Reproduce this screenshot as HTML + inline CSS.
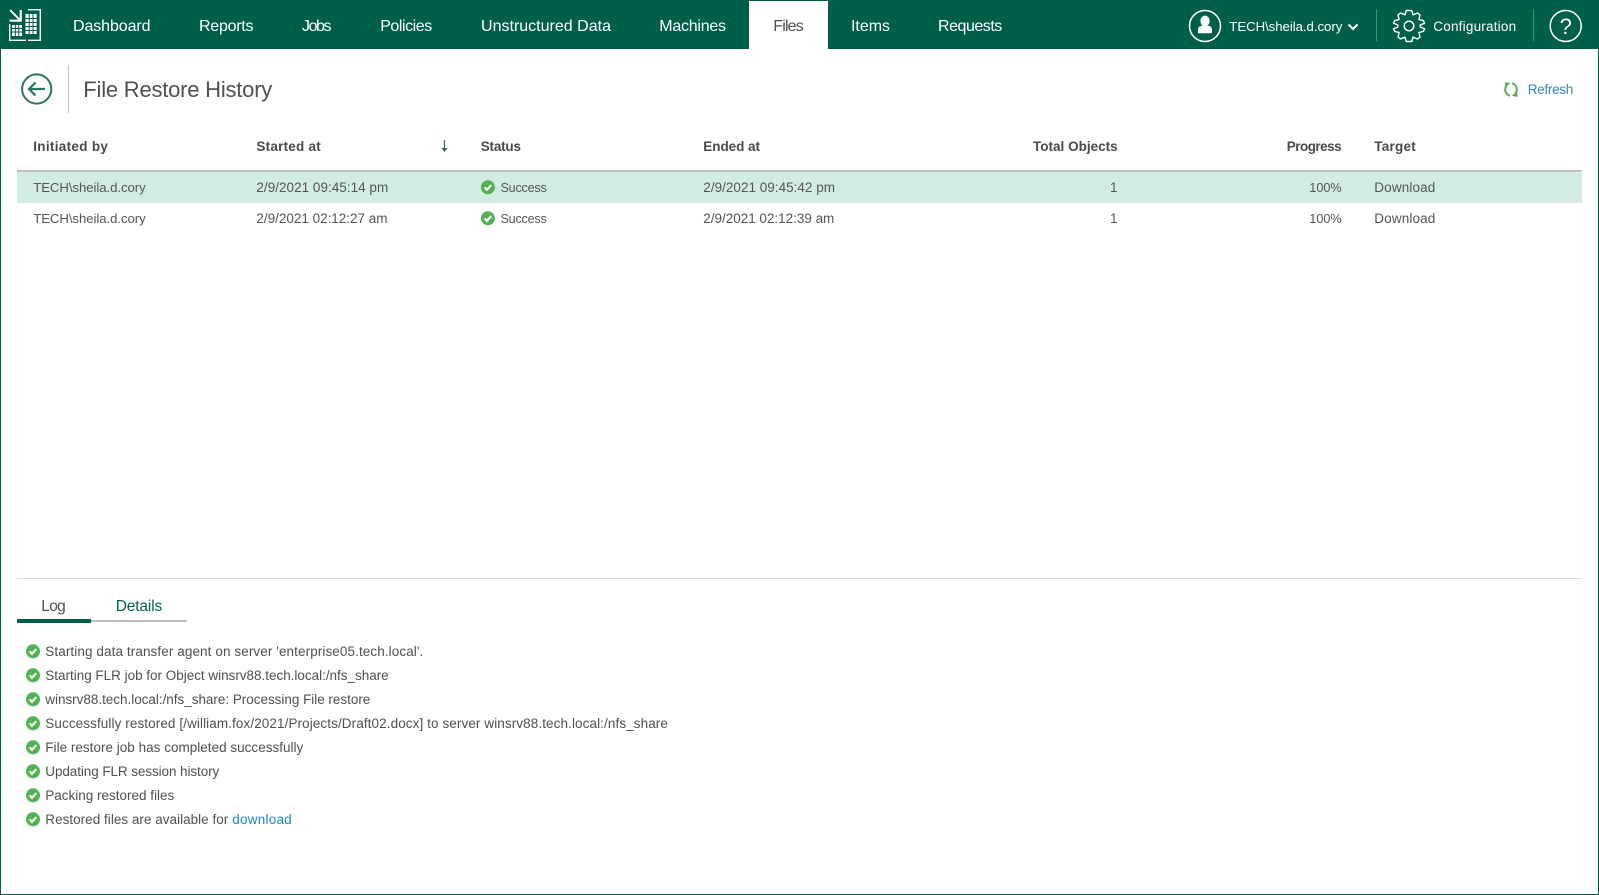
<!DOCTYPE html>
<html lang="en">
<head>
<meta charset="utf-8">
<title>File Restore History</title>
<style>
html,body{margin:0;padding:0;background:#fff;width:1599px;height:895px;overflow:hidden}
svg{display:block;position:absolute;left:0;top:0}
text{font-family:"Liberation Sans",Arial,sans-serif;font-size:13.5px;fill:#555;white-space:pre}
.nav{font-size:16px;fill:#fff}
.hd{font-weight:700;fill:#4a4a4a;font-size:13.5px}
.log{fill:#505050;font-size:13.5px}
.top{fill:#fff;font-size:13.5px}
.su{font-size:12.6px}
.pc{font-size:12.7px}
.us{font-size:13.2px}
</style>
</head>
<body>
<svg width="1599" height="895" viewBox="0 0 1599 895" xmlns="http://www.w3.org/2000/svg">
<!-- frame -->
<rect x="0" y="0" width="1599" height="895" fill="#fff"/>
<rect x="0" y="0" width="1" height="895" fill="#005f4b"/>
<rect x="1598" y="0" width="1" height="895" fill="#005f4b"/>
<rect x="0" y="894" width="1599" height="1" fill="#005f4b"/>
<!-- header -->
<rect x="0" y="0" width="1599" height="49" fill="#005f4b"/>
<rect x="749" y="1" width="79" height="48" fill="#fff"/>
<!-- logo -->
<g fill="none" stroke="#fff" stroke-width="1.4">
<path d="M28 9.7H40.3V40.3H28"/>
<path d="M9.7 24V40.3H26"/>
</g>
<path d="M9.5 10.8L10.8 9.5L19.6 18.3V10H21.8V21.8H9.5V19.6H18.1Z" fill="#fff"/>
<rect x="25.5" y="14" width="11.2" height="20" fill="#fff"/>
<path d="M25.5 18.5H36.7M25.5 22.5H36.7M25.5 26.5H36.7M25.5 30.5H36.7M29.2 14V34M33 14V34" stroke="#005f4b" stroke-width="1"/>
<rect x="12" y="25" width="10" height="11" fill="#fff"/>
<path d="M12 28.5H22M12 32H22M15.3 25V36M18.7 25V36" stroke="#005f4b" stroke-width="1"/>
<!-- nav -->
<text class="nav" x="73" y="31" textLength="77.5">Dashboard</text>
<text class="nav" x="199" y="31" textLength="54.5">Reports</text>
<text class="nav" x="302" y="31" textLength="29.5">Jobs</text>
<text class="nav" x="380.2" y="31" textLength="52">Policies</text>
<text class="nav" x="481" y="31" textLength="130">Unstructured Data</text>
<text class="nav" x="659.3" y="31" textLength="66.7">Machines</text>
<text class="nav" x="773.3" y="31" textLength="30.4" style="fill:#505050">Files</text>
<text class="nav" x="851" y="31" textLength="39">Items</text>
<text class="nav" x="938" y="31" textLength="64.3">Requests</text>
<!-- user -->
<circle cx="1205" cy="26" r="15.5" fill="none" stroke="#fff" stroke-width="1.5"/>
<ellipse cx="1205" cy="21" rx="4.6" ry="5.4" fill="#fff"/>
<path d="M1198 33.3V29.5Q1198 26.6 1201.5 25.8H1208.5Q1212 26.6 1212 29.5V33.3Z" fill="#fff"/>
<text class="top us" x="1229.3" y="31" textLength="113">TECH\sheila.d.cory</text>
<path d="M1348.5 24.5L1353 29L1357.5 24.5" fill="none" stroke="#fff" stroke-width="2.2"/>
<rect x="1376" y="9" width="1" height="32" fill="#4d8d7d"/>
<!-- gear -->
<g transform="translate(1409 26)" fill="none" stroke="#fff" stroke-width="1.4" stroke-linejoin="round">
<circle r="4.8"/>
<path d="M-2.8 -15.5H2.8L4 -11.2L8.6 -13L11 -11L9.9 -6.6L14.4 -5.3L15.5 -2.8L11.2 -1L11.2 1L15.5 2.8L14.4 5.3L9.9 6.6L11 11L8.6 13L4 11.2L2.8 15.5H-2.8L-4 11.2L-8.6 13L-11 11L-9.9 6.6L-14.4 5.3L-15.5 2.8L-11.2 1L-11.2 -1L-15.5 -2.8L-14.4 -5.3L-9.9 -6.6L-11 -11L-8.6 -13L-4 -11.2Z"/>
</g>
<text class="top" x="1433.3" y="31" textLength="82.8">Configuration</text>
<rect x="1533" y="9" width="1" height="32" fill="#4d8d7d"/>
<circle cx="1565.7" cy="26" r="15.5" fill="none" stroke="#fff" stroke-width="1.5"/>
<text x="1565.7" y="34" text-anchor="middle" style="font-size:22px;fill:#fff">?</text>
<!-- title bar -->
<circle cx="36.7" cy="89" r="14.6" fill="none" stroke="#2b7660" stroke-width="2"/>
<path d="M45 89H29M35.5 82.5L29 89L35.5 95.5" fill="none" stroke="#2b7660" stroke-width="2.2"/>
<rect x="68" y="65" width="1" height="48" fill="#c4c4c4"/>
<text x="83.3" y="97" textLength="189" style="font-size:22px;fill:#505050">File Restore History</text>
<!-- refresh -->
<g fill="none" stroke="#52b153" stroke-width="2">
<path d="M1506.6 85.5A6.4 6.4 0 0 0 1510 95.7"/>
<path d="M1515.4 93.5A6.4 6.4 0 0 0 1512 83.3"/>
</g>
<path d="M1504.6 82.3L1510.4 83L1505.8 87.6Z" fill="#52b153"/>
<path d="M1517.8 96.8L1511.8 96L1516.6 91.4Z" fill="#52b153"/>
<text x="1527.7" y="94" textLength="45.6" style="fill:#2f88bb">Refresh</text>
<!-- table -->
<text class="hd" x="33.2" y="151" textLength="74.7">Initiated by</text>
<text class="hd" x="256.4" y="151" textLength="64.3">Started at</text>
<text class="hd" x="480.7" y="151" textLength="40.3">Status</text>
<text class="hd" x="703.3" y="151" textLength="56.7">Ended at</text>
<text class="hd" x="1033" y="151" textLength="84.7">Total Objects</text>
<text class="hd" x="1286.7" y="151" textLength="55">Progress</text>
<text class="hd" x="1374.3" y="151" textLength="41.4">Target</text>
<path d="M444.5 140V150.5" stroke="#2b6b57" stroke-width="1.2"/>
<path d="M441.5 148L444.5 152L447.5 148Z" fill="#2b6b57"/>
<rect x="17" y="170" width="1565" height="2" fill="#c0c0c0"/>
<rect x="17" y="172" width="1565" height="30" fill="#d2ece1"/>
<rect x="17" y="202" width="1565" height="1" fill="#dfe3e1"/>

<text class="us" x="33.2" y="192" textLength="112.5">TECH\sheila.d.cory</text>
<text x="256.4" y="192" textLength="131.8">2/9/2021 09:45:14 pm</text>
<g transform="translate(487.9 187.3)"><circle r="7" fill="#52b153"/><path d="M-3.4 0.1L-1 2.5L3.4 -2.2" fill="none" stroke="#fff" stroke-width="2.2"/></g>
<text class="su" x="500.5" y="192" textLength="46.3">Success</text>
<text x="703.3" y="192" textLength="131.7">2/9/2021 09:45:42 pm</text>
<text x="1110" y="192">1</text>
<text class="pc" x="1309.3" y="192" textLength="32.4">100%</text>
<text x="1374.3" y="192" textLength="61">Download</text>

<text class="us" x="33.2" y="223" textLength="112.5">TECH\sheila.d.cory</text>
<text x="256.4" y="223" textLength="131.1">2/9/2021 02:12:27 am</text>
<g transform="translate(487.9 218.3)"><circle r="7" fill="#52b153"/><path d="M-3.4 0.1L-1 2.5L3.4 -2.2" fill="none" stroke="#fff" stroke-width="2.2"/></g>
<text class="su" x="500.5" y="223" textLength="46.3">Success</text>
<text x="703.3" y="223" textLength="131">2/9/2021 02:12:39 am</text>
<text x="1110" y="223">1</text>
<text class="pc" x="1309.3" y="223" textLength="32.4">100%</text>
<text x="1374.3" y="223" textLength="61">Download</text>
<!-- bottom panel -->
<rect x="17" y="578" width="1565" height="1" fill="#ddd"/>
<text x="41.3" y="611" textLength="24.4" style="font-size:15.5px;fill:#505050">Log</text>
<text x="115.7" y="611" textLength="46.6" style="font-size:15.5px;fill:#00664f">Details</text>
<rect x="91" y="620" width="96" height="2" fill="#bdbdbd"/>
<rect x="17" y="619" width="74" height="4" fill="#005f4b"/>

<g transform="translate(33 651.3)"><circle r="7" fill="#52b153"/><path d="M-3.4 0.1L-1 2.5L3.4 -2.2" fill="none" stroke="#fff" stroke-width="2.2"/></g>
<text class="log" x="45.3" y="656" textLength="378">Starting data transfer agent on server 'enterprise05.tech.local'.</text>
<g transform="translate(33 675.3)"><circle r="7" fill="#52b153"/><path d="M-3.4 0.1L-1 2.5L3.4 -2.2" fill="none" stroke="#fff" stroke-width="2.2"/></g>
<text class="log" x="45.3" y="680" textLength="343.4">Starting FLR job for Object winsrv88.tech.local:/nfs_share</text>
<g transform="translate(33 699.3)"><circle r="7" fill="#52b153"/><path d="M-3.4 0.1L-1 2.5L3.4 -2.2" fill="none" stroke="#fff" stroke-width="2.2"/></g>
<text class="log" x="45.3" y="704" textLength="325">winsrv88.tech.local:/nfs_share: Processing File restore</text>
<g transform="translate(33 723.3)"><circle r="7" fill="#52b153"/><path d="M-3.4 0.1L-1 2.5L3.4 -2.2" fill="none" stroke="#fff" stroke-width="2.2"/></g>
<text class="log" x="45.3" y="728" textLength="622.6">Successfully restored [/william.fox/2021/Projects/Draft02.docx] to server winsrv88.tech.local:/nfs_share</text>
<g transform="translate(33 747.3)"><circle r="7" fill="#52b153"/><path d="M-3.4 0.1L-1 2.5L3.4 -2.2" fill="none" stroke="#fff" stroke-width="2.2"/></g>
<text class="log" x="45.3" y="752" textLength="258">File restore job has completed successfully</text>
<g transform="translate(33 771.3)"><circle r="7" fill="#52b153"/><path d="M-3.4 0.1L-1 2.5L3.4 -2.2" fill="none" stroke="#fff" stroke-width="2.2"/></g>
<text class="log" x="45.3" y="776" textLength="174">Updating FLR session history</text>
<g transform="translate(33 795.3)"><circle r="7" fill="#52b153"/><path d="M-3.4 0.1L-1 2.5L3.4 -2.2" fill="none" stroke="#fff" stroke-width="2.2"/></g>
<text class="log" x="45.3" y="800" textLength="129">Packing restored files</text>
<g transform="translate(33 819.3)"><circle r="7" fill="#52b153"/><path d="M-3.4 0.1L-1 2.5L3.4 -2.2" fill="none" stroke="#fff" stroke-width="2.2"/></g>
<text class="log" x="45.3" y="824" textLength="183">Restored files are available for</text>
<text class="log" x="232.3" y="824" textLength="59.4" style="fill:#1c87bd">download</text>
</svg>
</body>
</html>
